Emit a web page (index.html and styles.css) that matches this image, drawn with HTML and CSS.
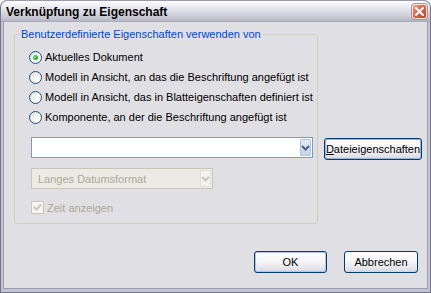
FILE: index.html
```html
<!DOCTYPE html>
<html lang="de">
<head>
<meta charset="utf-8">
<title>Verknüpfung zu Eigenschaft</title>
<link rel="stylesheet" href="styles.css">
</head>
<body>
<div class="window">
  <div class="titlebar">
    <span class="title">Verknüpfung zu Eigenschaft</span>
    <span class="close"><svg width="9" height="9" viewBox="0 0 9 9"><path d="M1 1L8 8M8 1L1 8" stroke="#fff" stroke-width="2" stroke-linecap="square"/></svg></span>
  </div>
  <div class="client">
    <div class="top-row">
      <fieldset class="group">
        <legend>Benutzerdefinierte Eigenschaften verwenden von</legend>
        <div class="opt"><span class="radio checked"></span><span>Aktuelles Dokument</span></div>
        <div class="opt"><span class="radio"></span><span>Modell in Ansicht, an das die Beschriftung angefügt ist</span></div>
        <div class="opt"><span class="radio"></span><span>Modell in Ansicht, das in Blatteigenschaften definiert ist</span></div>
        <div class="opt"><span class="radio"></span><span>Komponente, an der die Beschriftung angefügt ist</span></div>
        <div class="combo main">
          <span class="val"></span>
          <span class="drop"><svg width="9" height="6" viewBox="0 0 9 6"><path d="M1 1L4.5 4.5L8 1" fill="none" stroke="#4d6185" stroke-width="2"/></svg></span>
        </div>
        <div class="combo disabled">
          <span class="val">Langes Datumsformat</span>
          <span class="drop"><svg width="9" height="6" viewBox="0 0 9 6"><path d="M1 1L4.5 4.5L8 1" fill="none" stroke="#c9c7ba" stroke-width="2"/></svg></span>
        </div>
        <div class="check">
          <span class="box"><svg width="9" height="9" viewBox="0 0 9 9"><path d="M1 4L3.5 6.5L8 1.5" fill="none" stroke="#c9c7ba" stroke-width="2"/></svg></span>
          <span>Zeit anzeigen</span>
        </div>
      </fieldset>
      <div class="side">
        <button class="btn file"><u>D</u>ateieigenschaften</button>
      </div>
    </div>
    <div class="actions">
      <button class="btn ok">OK</button>
      <button class="btn cancel">Abbrechen</button>
    </div>
  </div>
</div>
</body>
</html>
```

FILE: styles.css
```css
* { box-sizing: border-box; }
html, body { margin: 0; padding: 0; background: #fff; }
body {
  font-family: "Liberation Sans", Arial, sans-serif;
  font-size: 11px;
  color: #000;
}
.window {
  width: 431px;
  height: 293px;
  display: flex;
  flex-direction: column;
  background: #c4c3d0;
  border: 1px solid #75758a;
  border-top: none;
  border-radius: 7px 7px 0 0;
  overflow: hidden;
}
.titlebar {
  height: 22px;
  flex: none;
  display: flex;
  align-items: center;
  justify-content: space-between;
  padding: 0 3px 0 5px;
  background: linear-gradient(#ffffff 0%, #e9e9f0 30%, #d5d5de 60%, #c2c2cf 85%, #a9a9ba 100%);
  border-top: 1px solid #9a9aac;
  border-radius: 7px 7px 0 0;
}
.title {
  font-weight: bold;
  font-size: 12px;
  color: #000;
  letter-spacing: 0;
}
.close {
  width: 15px;
  height: 15px;
  border: 1px solid #f3e4e0;
  border-radius: 3px;
  background: linear-gradient(135deg, #eea090 0%, #d9604a 50%, #c0412b 100%);
  display: flex;
  align-items: center;
  justify-content: center;
  box-shadow: 0 0 0 1px #b98f88;
}
.client {
  flex: 1;
  margin: 0 2px 3px 2px;
  background: #e0dfe3;
  border: 1px solid #9d9daf;
  border-top: none;
  display: flex;
  flex-direction: column;
}
.top-row {
  display: flex;
  align-items: flex-start;
}
.group {
  margin: 6px 0 0 10px;
  width: 304px;
  border: 1px solid #d0d0bf;
  border-radius: 3px;
  padding: 6px 4px 9px 4px;
  min-width: 0;
}
.group legend {
  color: #0046d5;
  padding: 0 2px;
  line-height: 13px;
}
.opt {
  height: 20px;
  display: flex;
  align-items: center;
  gap: 3px;
  margin-left: 10px;
  white-space: nowrap;
}
.radio {
  width: 13px;
  height: 13px;
  flex: none;
  border-radius: 50%;
  border: 1px solid #1c5180;
  background: linear-gradient(135deg, #dcdcd7 0%, #fafaf8 60%, #ffffff 100%);
  display: flex;
  align-items: center;
  justify-content: center;
}
.radio.checked::after {
  content: "";
  width: 5px;
  height: 5px;
  border-radius: 50%;
  background: radial-gradient(circle at 35% 35%, #8fe38f 0%, #2fb42f 50%, #1a8a1a 100%);
}
.combo {
  display: flex;
  align-items: stretch;
  height: 21px;
  margin-left: 12px;
  border: 1px solid #7f9db9;
  background: #fff;
  padding: 1px;
}
.combo.main {
  margin-top: 10px;
  width: 282px;
}
.combo .val {
  flex: 1;
  display: flex;
  align-items: center;
  padding-left: 5px;
}
.combo .drop {
  width: 11px;
  flex: none;
  display: flex;
  align-items: center;
  justify-content: center;
  background: linear-gradient(#e7ebf5, #c7d2e8);
  border: 1px solid #b2c1de;
  border-radius: 1px;
}
.combo.disabled {
  margin-top: 10px;
  width: 182px;
  border-color: #c9c7ba;
  background: #ebebe4;
  color: #aca899;
}
.combo.disabled .val {
  background: #ebebe4;
}
.combo.disabled .drop {
  width: 11px;
  background: #f4f3ee;
  border-color: #e0dfd8;
}
.check {
  margin: 12px 0 0 12px;
  height: 13px;
  display: flex;
  align-items: center;
  gap: 3px;
  color: #aca899;
}
.box {
  width: 13px;
  height: 13px;
  border: 1px solid #cac8bb;
  background: #f4f4f0;
  display: flex;
  align-items: center;
  justify-content: center;
}
.side {
  margin: 116px 0 0 6px;
}
.btn {
  font-family: "Liberation Sans", Arial, sans-serif;
  font-size: 11px;
  color: #000;
  height: 22px;
  padding: 0;
  border: 1px solid #003c74;
  border-radius: 3px;
  background: linear-gradient(#ffffff 0%, #f4f4f7 50%, #e3e3ea 85%, #d2d2dc 100%);
  display: flex;
  align-items: center;
  justify-content: center;
}
.btn u { text-decoration: underline; }
.btn.file {
  width: 98px;
  box-shadow: inset 0 0 0 1px #98b4e0;
}
.actions {
  margin-top: 27px;
  display: flex;
  justify-content: flex-end;
  gap: 17px;
  padding-right: 9px;
}
.btn.ok {
  width: 73px;
  box-shadow: inset 0 0 0 1px #b0c6ea;
}
.btn.cancel {
  width: 74px;
}
```
